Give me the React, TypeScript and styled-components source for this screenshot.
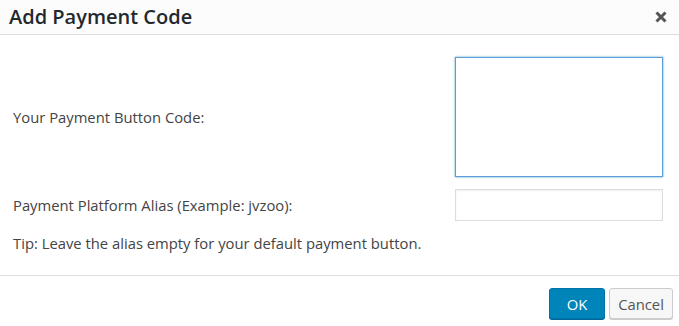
import React from 'react';
import styled, { createGlobalStyle } from 'styled-components';

const GlobalStyle = createGlobalStyle`
  html, body {
    margin: 0;
    padding: 0;
    background: #fff;
  }
  body {
    font-family: 'Open Sans', 'Liberation Sans', sans-serif;
    color: #444;
  }
`;

const Dialog = styled.div`
  width: 679px;
  height: 326px;
  background: #fff;
  display: flex;
  flex-direction: column;
`;

const Header = styled.div`
  height: 34px;
  display: flex;
  align-items: center;
  justify-content: space-between;
  padding: 0 11px 0 9px;
  background: #fcfcfc;
  border-bottom: 1px solid #dddddd;
`;

const Title = styled.h1`
  margin: 0;
  font-size: 20px;
  font-weight: 600;
  color: #23282d;
  line-height: 1;
`;

const CloseButton = styled.button`
  width: 14px;
  height: 14px;
  padding: 0;
  border: none;
  background: transparent;
  display: flex;
  align-items: center;
  justify-content: center;
  cursor: pointer;
`;

const Body = styled.div`
  display: grid;
  grid-template-columns: 1fr 208px;
  column-gap: 16px;
  row-gap: 12px;
  padding: 22px 16px 22px 13px;
  border-bottom: 1px solid #dddddd;
`;

const Label = styled.label`
  font-size: 14.8px;
  line-height: 20px;
  color: #444;
  align-self: center;
`;

const CodeArea = styled.textarea`
  box-sizing: border-box;
  width: 208px;
  height: 120px;
  border: 1px solid #5b9dd9;
  box-shadow: 0 0 2px rgba(30, 140, 190, 0.8);
  outline: none;
  resize: none;
  padding: 4px;
  font-family: inherit;
  font-size: 14px;
`;

const AliasInput = styled.input`
  box-sizing: border-box;
  width: 208px;
  height: 32px;
  border: 1px solid #dddddd;
  box-shadow: inset 0 1px 2px rgba(0, 0, 0, 0.07);
  outline: none;
  padding: 0 6px;
  font-family: inherit;
  font-size: 14px;
`;

const Tip = styled.p`
  grid-column: 1 / -1;
  margin: 0;
  font-size: 14.8px;
  line-height: 20px;
  color: #444;
`;

const Footer = styled.div`
  display: flex;
  justify-content: flex-end;
  gap: 4px;
  padding: 12px 6px 0 0;
`;

const Button = styled.button<{ $primary?: boolean }>`
  box-sizing: border-box;
  width: ${(p) => (p.$primary ? '56px' : '64px')};
  height: 31px;
  padding: 0;
  border-radius: 3px;
  font-family: inherit;
  font-size: 14.8px;
  cursor: pointer;
  border: 1px solid ${(p) => (p.$primary ? '#0073aa' : '#cccccc')};
  background: ${(p) => (p.$primary ? '#0085ba' : '#f7f7f7')};
  color: ${(p) => (p.$primary ? '#ffffff' : '#555555')};
  box-shadow: ${(p) =>
    p.$primary ? '0 1px 0 #006799' : '0 1px 0 #cccccc'};
`;

const CloseIcon = () => (
  <svg width='12' height='12' viewBox='0 0 12 12'>
    <path
      d='M1.5 1.5 L10.5 10.5 M10.5 1.5 L1.5 10.5'
      stroke='#555'
      strokeWidth='3'
      strokeLinecap='butt'
    />
  </svg>
);

export default function App() {
  return (
    <>
      <GlobalStyle />
      <Dialog>
        <Header>
          <Title>Add Payment Code</Title>
          <CloseButton aria-label='Close'>
            <CloseIcon />
          </CloseButton>
        </Header>
        <Body>
          <Label htmlFor='code'>Your Payment Button Code:</Label>
          <CodeArea id='code' />
          <Label htmlFor='alias'>Payment Platform Alias (Example: jvzoo):</Label>
          <AliasInput id='alias' type='text' />
          <Tip>Tip: Leave the alias empty for your default payment button.</Tip>
        </Body>
        <Footer>
          <Button $primary>OK</Button>
          <Button>Cancel</Button>
        </Footer>
      </Dialog>
    </>
  );
}
